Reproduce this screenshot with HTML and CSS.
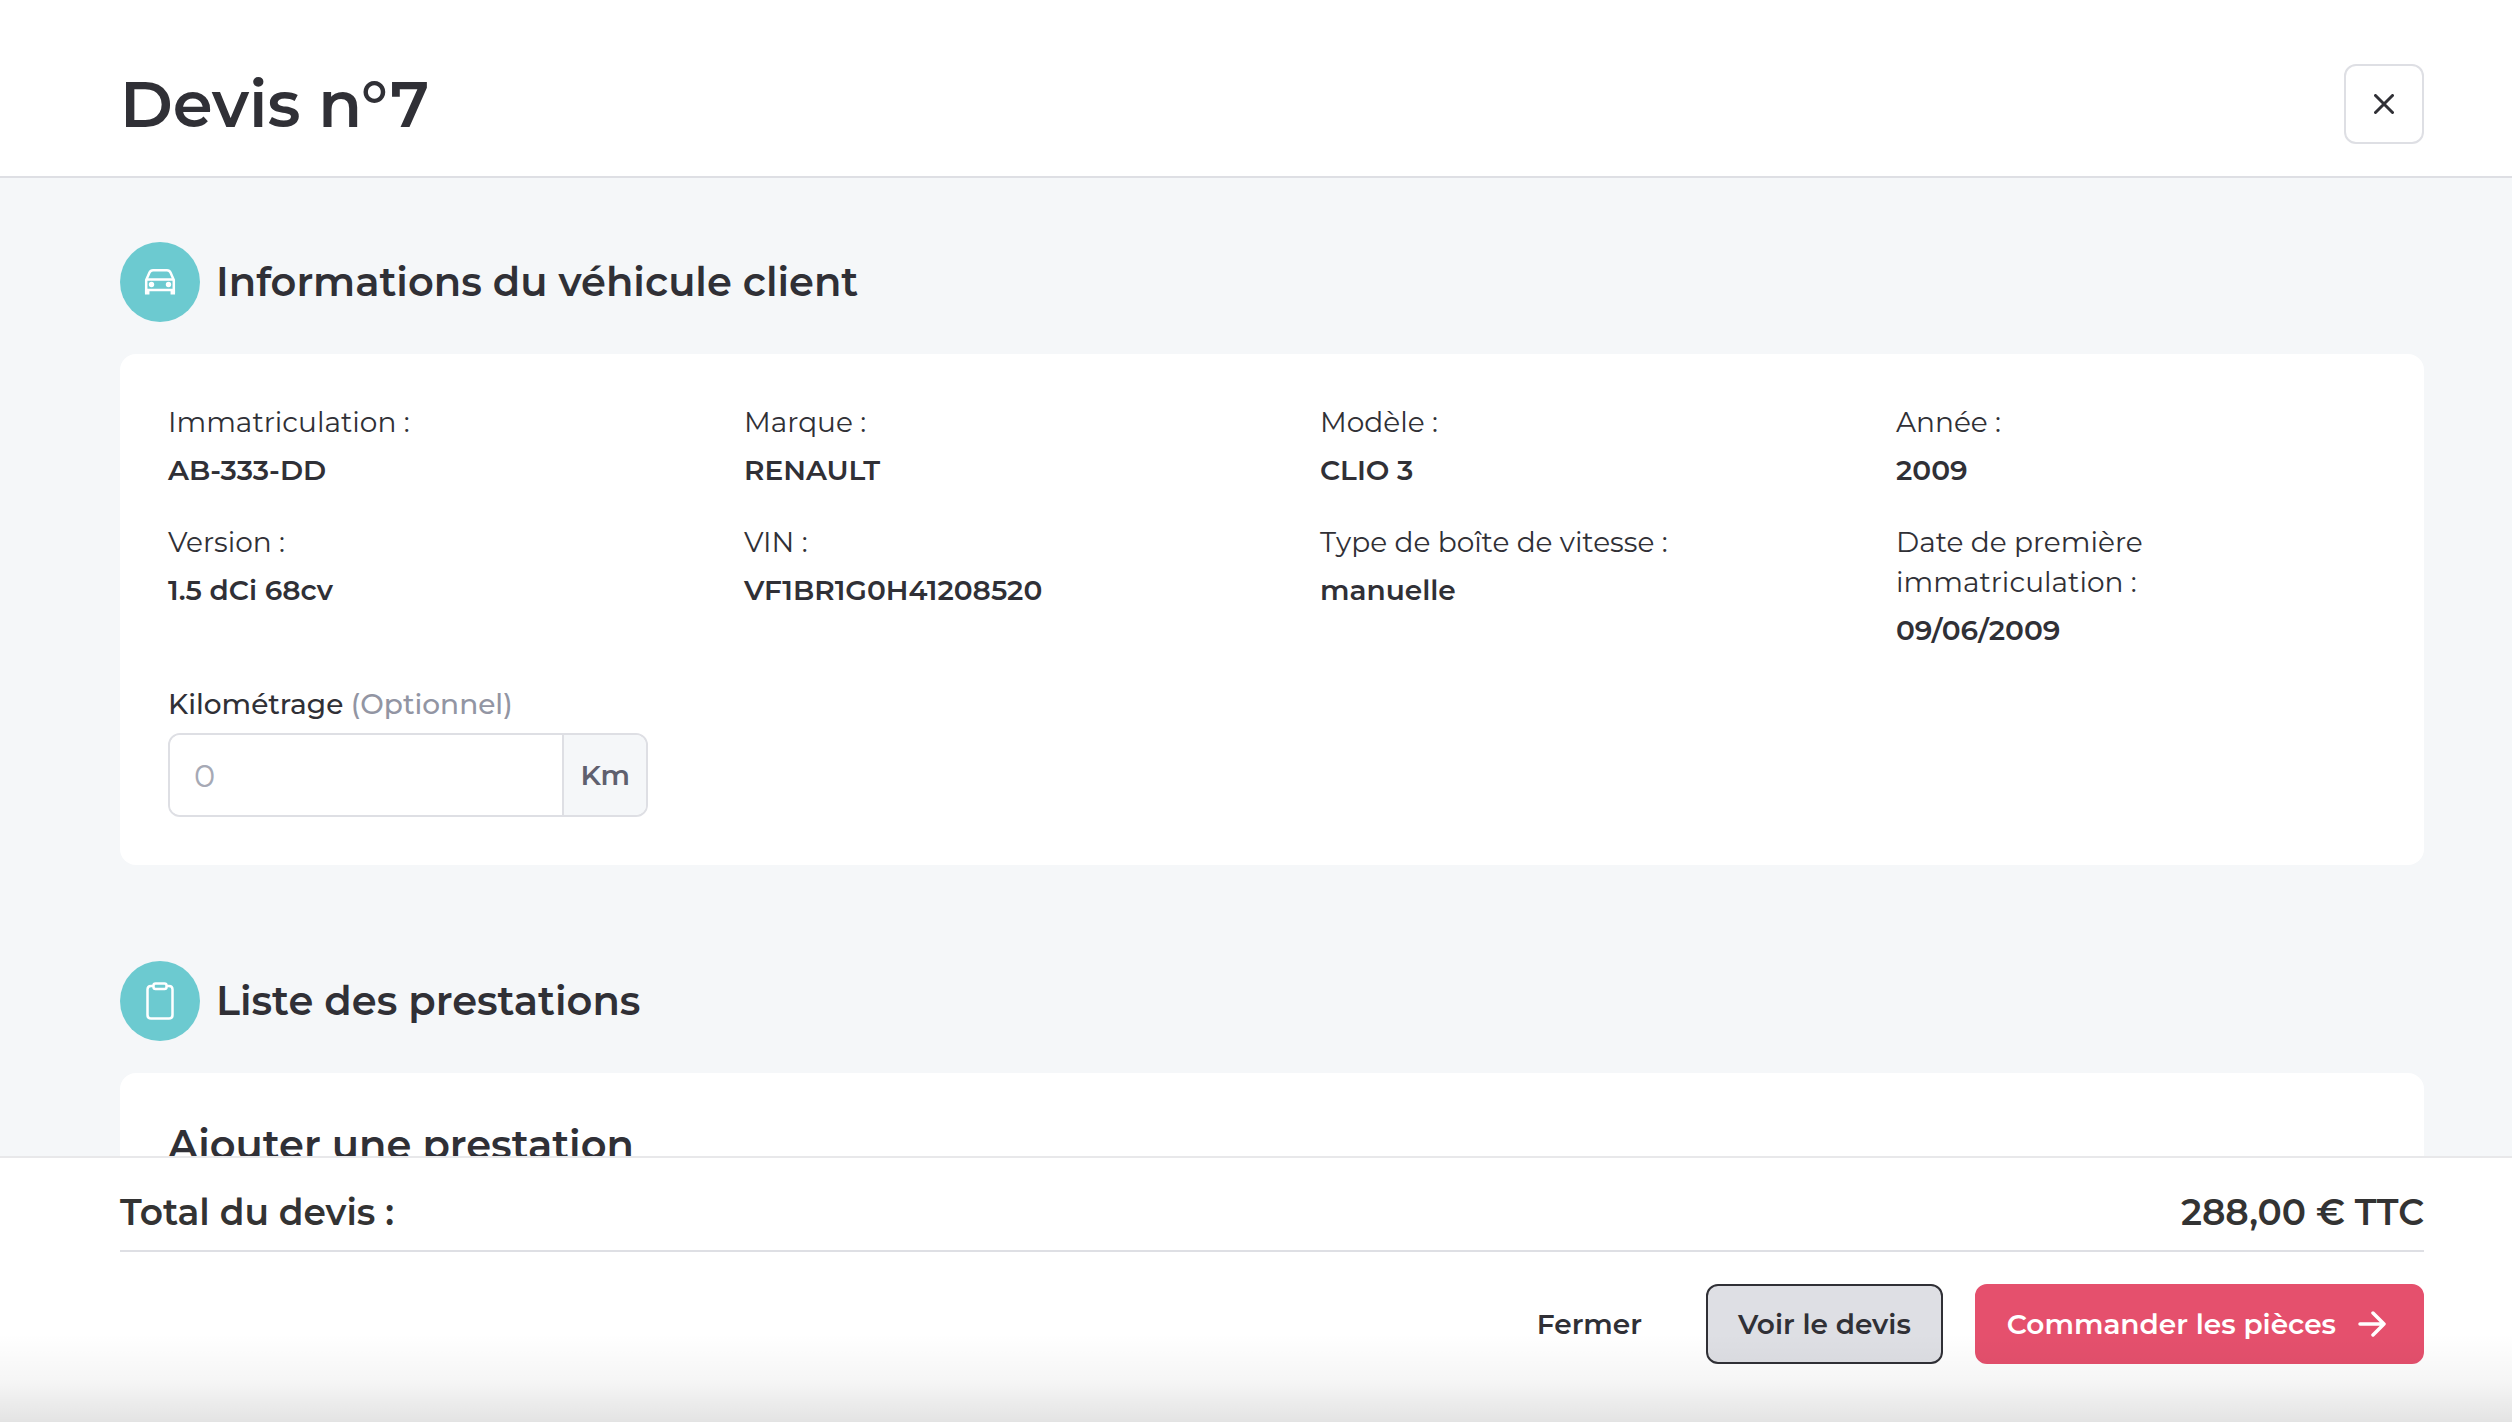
FILE: index.html
```
<!DOCTYPE html>
<html lang="fr">

<head>
    <meta charset="UTF-8">
    <meta name="viewport" content="width=device-width, initial-scale=1.0">
    <title>Devis n°7</title>
    <link rel="stylesheet" href="styles.css">
</head>

<body>
    <header class="header">
        <h1>Devis n°7</h1>
        <button type="button" class="btn btn-close" aria-label="Fermer le devis">
            <svg width="20" height="20" viewBox="0 0 20 20" fill="none" stroke="currentColor" stroke-width="3" stroke-linecap="round">
                <path d="M1.5 1.5l17 17M18.5 1.5l-17 17" />
            </svg>
        </button>
    </header>

    <main class="content">
        <section class="section">
            <div class="section-title">
                <span class="section-icon">
                    <svg width="32" height="28" viewBox="0 0 32 28" fill="none" stroke="currentColor" stroke-width="2.500">
                        <path d="M2.200 25V12L5.500 4.500Q6.500 2.200 9 2.200H23Q25.500 2.200 26.500 4.500L29.800 12V25" />
                        <path d="M2 11.500H30M2 22H30" />
                        <path d="M3.200 22V26.500M28.800 22V26.500" stroke-width="4.500" />
                        <circle cx="7.500" cy="16.500" r="2.700" fill="currentColor" stroke="none" />
                        <circle cx="24.500" cy="16.500" r="2.700" fill="currentColor" stroke="none" />
                    </svg>
                </span>
                <h2>Informations du véhicule client</h2>
            </div>
            <div class="card">
                <dl class="infos">
                    <div>
                        <dt>Immatriculation :</dt>
                        <dd>AB-333-DD</dd>
                    </div>
                    <div>
                        <dt>Marque :</dt>
                        <dd>RENAULT</dd>
                    </div>
                    <div>
                        <dt>Modèle :</dt>
                        <dd>CLIO 3</dd>
                    </div>
                    <div>
                        <dt>Année :</dt>
                        <dd>2009</dd>
                    </div>
                    <div>
                        <dt>Version :</dt>
                        <dd>1.5 dCi 68cv</dd>
                    </div>
                    <div>
                        <dt>VIN :</dt>
                        <dd>VF1BR1G0H41208520</dd>
                    </div>
                    <div>
                        <dt>Type de boîte de vitesse :</dt>
                        <dd>manuelle</dd>
                    </div>
                    <div>
                        <dt>Date de première immatriculation :</dt>
                        <dd>09/06/2009</dd>
                    </div>
                </dl>
                <div class="infos">
                    <div class="field">
                        <label for="mileage">Kilométrage <span class="optional">(Optionnel)</span></label>
                        <div class="input-group">
                            <input type="text" id="mileage" inputmode="numeric" placeholder="0">
                            <span class="unit">Km</span>
                        </div>
                    </div>
                </div>
            </div>
        </section>

        <section class="section">
            <div class="section-title">
                <span class="section-icon">
                    <svg width="28" height="38" viewBox="0 0 28 38" fill="none" stroke="currentColor" stroke-width="2.500">
                        <path d="M7.500 4H5Q1.500 4 1.500 7.500V33Q1.500 36.500 5 36.500H23Q26.500 36.500 26.500 33V7.500Q26.500 4 23 4H20.500" />
                        <rect x="7.500" y="1.500" width="13" height="5.500" rx="2" />
                    </svg>
                </span>
                <h2>Liste des prestations</h2>
            </div>
            <div class="card">
                <h3>Ajouter une prestation</h3>
            </div>
        </section>
    </main>

    <footer class="footer">
        <div class="total">
            <span>Total du devis :</span>
            <span>288,00 € TTC</span>
        </div>
        <div class="actions">
            <button type="button" class="btn">Fermer</button>
            <button type="button" class="btn btn-secondary">Voir le devis</button>
            <button type="button" class="btn btn-primary">
                Commander les pièces
                <svg width="28" height="28" viewBox="0 0 28 28" fill="none" stroke="currentColor" stroke-width="3.500" stroke-linecap="round" stroke-linejoin="round">
                    <path d="M2 14H26M15 3L26 14L15 25" />
                </svg>
            </button>
        </div>
    </footer>
</body>

</html>
```

FILE: styles.css
```
* {
    box-sizing: border-box;
}

body {
    display: flex;
    flex-direction: column;
    height: 100vh;
    margin: 0;
    background-color: #f5f7f9;
    color: #303036;
    font-family: Montserrat, Inter, sans-serif;
    font-size: 28px;
    line-height: 40px;
}

h1,
h2,
h3,
dl,
dd {
    margin: 0;
}

h1,
h2,
h3,
dd {
    font-weight: 600;
}

h1 {
    font-size: 64px;
    line-height: 80px;
}

h2,
h3 {
    font-size: 40px;
    line-height: 48px;
}

button,
input {
    color: inherit;
    font-family: inherit;
}

svg {
    display: block;
    flex: none;
}

.header {
    display: flex;
    align-items: center;
    justify-content: space-between;
    padding: 64px 88px 32px 120px;
    border-bottom: 2px solid #dedfe4;
    background-color: #fff;
}

.btn {
    display: flex;
    align-items: center;
    justify-content: center;
    gap: 22px;
    height: 80px;
    padding: 0 30px;
    border: 2px solid transparent;
    border-radius: 12px;
    background-color: transparent;
    font-size: 28px;
    font-weight: 600;
    cursor: pointer;
}

.btn-close {
    width: 80px;
    padding: 0;
    border-color: #dedfe4;
}

.btn-secondary {
    border-color: #303036;
    background-color: #dedfe4;
}

.btn-primary {
    padding-right: 36px;
    border-color: #e5506d;
    background-color: #e5506d;
    color: #fff;
}

.content {
    flex: 1;
    min-height: 0;
    padding: 64px 88px 0 120px;
    overflow-y: auto;
    scrollbar-width: none;
}

.section {
    margin-bottom: 96px;
}

.section-title {
    display: flex;
    align-items: center;
    gap: 16px;
    margin-bottom: 32px;
}

.section-icon {
    display: flex;
    align-items: center;
    justify-content: center;
    width: 80px;
    height: 80px;
    border-radius: 50%;
    background-color: #6ccad0;
    color: #fff;
}

.card {
    padding: 48px;
    border-radius: 16px;
    background-color: #fff;
}

.infos {
    display: grid;
    grid-template-columns: repeat(4, minmax(0, 1fr));
    gap: 32px 96px;
}

dd {
    margin-top: 8px;
}

.field {
    margin-top: 32px;
    font-weight: 500;
}

.field label {
    display: block;
    margin-bottom: 7px;
    line-height: 44px;
}

.optional {
    color: #9295a3;
}

.input-group {
    display: flex;
    height: 84px;
    border: 2px solid #dedfe4;
    border-radius: 12px;
    overflow: hidden;
}

.input-group input {
    flex: 1;
    min-width: 0;
    padding: 0 24px;
    border: 0;
    outline: 0;
    font-size: 32px;
}

.input-group input::placeholder {
    color: #a6a9b5;
}

.input-group:focus-within {
    border-color: #6ccad0;
}

.unit {
    display: flex;
    align-items: center;
    padding: 0 16px;
    border-left: 2px solid #dedfe4;
    background-color: #f5f7f9;
    color: #5f606e;
    font-weight: 600;
}

.footer {
    position: relative;
    padding: 24px 88px 58px 120px;
    border-top: 2px solid #e8e8ea;
    background-color: #fff;
}

/* shade along the bottom edge of the window */
.footer::after {
    content: '';
    position: absolute;
    right: 0;
    bottom: 0;
    left: 0;
    height: 88px;
    background-image: linear-gradient(rgba(0, 0, 0, 0), rgba(0, 0, 0, 0.04) 55%, rgba(0, 0, 0, 0.11));
    pointer-events: none;
}

.total {
    display: flex;
    justify-content: space-between;
    padding-bottom: 8px;
    border-bottom: 2px solid #dedfe4;
    color: #333;
    font-size: 36px;
    font-weight: 600;
    line-height: 60px;
}

.actions {
    display: flex;
    justify-content: flex-end;
    gap: 32px;
    margin-top: 32px;
}
```
